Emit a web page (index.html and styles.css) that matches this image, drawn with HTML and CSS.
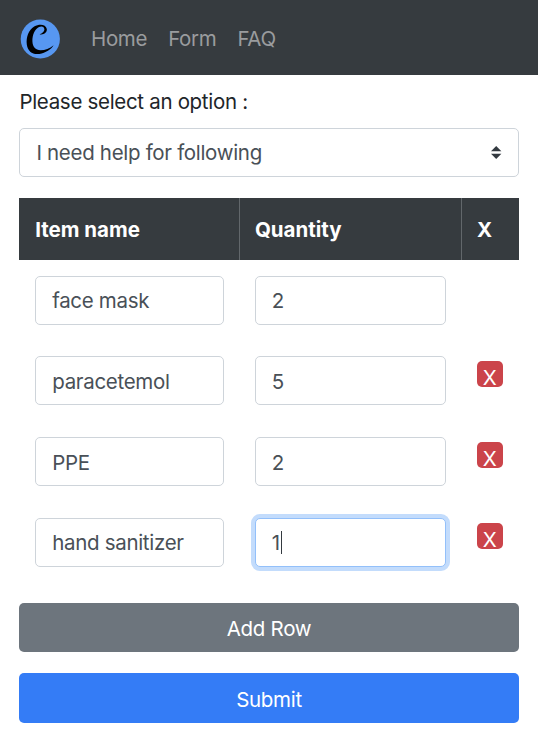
FILE: index.html
```html
<!DOCTYPE html>
<html lang="en">
<head>
<meta charset="utf-8">
<title>Request form</title>
<link rel="stylesheet" href="styles.css">
</head>
<body>
<nav class="navbar">
  <a class="brand" href="#" aria-label="Home page">
    <svg viewBox="0 0 40 40" width="40" height="40">
      <circle cx="20.3" cy="20" r="19.6" fill="#5797f1"/>
      <path d="M19.6 15.2C23.6 16.2 27.4 13.4 26.8 10C25.9 5.2 19.4 4.4 14.2 7.6C8.6 11 6 18.4 6.8 25.4C7.8 32.6 13 36 19.4 34.9C25.6 33.8 31.3 30.4 33.6 26.2C29.6 29.6 25.2 31.2 20.6 31.2C15.4 31.2 12.6 28 12.4 22.3C12.2 16 14.8 10 19 8C22 6.7 24.3 7.8 24.4 10.4C24.3 12.5 22.4 14.2 19.6 15.2Z" fill="#000"/>
    </svg>
  </a>
  <a class="nav-link" href="#">Home</a>
  <a class="nav-link" href="#">Form</a>
  <a class="nav-link" href="#">FAQ</a>
</nav>
<main class="content">
  <div class="label">Please select an option :</div>
  <div class="select">
    <span>I need help for following</span>
    <svg class="arrows" viewBox="0 0 4 5" width="10.4" height="13"><path fill="#343a40" d="M2 0L0 2h4zm0 5L0 3h4z"/></svg>
  </div>
  <div class="table">
    <div class="row head">
      <div class="cell">Item name</div><div class="cell">Quantity</div><div class="cell">X</div>
    </div>
    <div class="row">
      <div class="cell"><div class="input">face mask</div></div>
      <div class="cell"><div class="input">2</div></div>
      <div class="cell"></div>
    </div>
    <div class="row">
      <div class="cell"><div class="input">paracetemol</div></div>
      <div class="cell"><div class="input">5</div></div>
      <div class="cell"><button class="remove">X</button></div>
    </div>
    <div class="row">
      <div class="cell"><div class="input">PPE</div></div>
      <div class="cell"><div class="input">2</div></div>
      <div class="cell"><button class="remove">X</button></div>
    </div>
    <div class="row">
      <div class="cell"><div class="input">hand sanitizer</div></div>
      <div class="cell"><div class="input focus">1<i class="caret"></i></div></div>
      <div class="cell"><button class="remove">X</button></div>
    </div>
  </div>
  <button class="btn secondary">Add Row</button>
  <button class="btn primary">Submit</button>
</main>
</body>
</html>
```
FILE: styles.css
```css
* { box-sizing: border-box; }
body {
  margin: 0;
  background: #fff;
  color: #212529;
  font: 400 20.5px/31px Inter, "Liberation Sans", sans-serif;
  letter-spacing: -0.31px;
}
.navbar {
  display: flex;
  align-items: center;
  height: 75.4px;
  padding: 2px 20px 0;
  background: #363b3f;
}
.brand { display: block; height: 40px; margin-right: 31px; }
.brand svg { display: block; }
.nav-link {
  margin-right: 21px;
  color: #9a9c9e;
  letter-spacing: -0.33px;
  text-decoration: none;
}
.content { padding: 11px 19.4px 0; }
.label { height: 41.2px; }
.select {
  display: flex;
  align-items: center;
  justify-content: space-between;
  height: 49.3px;
  padding: 1px 16px 0;
  border: 1.3px solid #ced4da;
  border-radius: 5px;
  color: #495057;
}
.table { margin-top: 20.7px; }
.row { display: grid; grid-template-columns: 219.5px 222px 1fr; height: 80.6px; }
.row > .cell { padding: 16px 15px 16px 15.8px; }
.head {
  height: 62.3px;
  background: #363b3f;
  color: #fff;
  font-weight: 700;
  letter-spacing: 0;
}
.head > .cell { height: 62.3px; padding-top: 16.5px; }
.head > .cell + .cell { border-left: 1px solid #62676b; padding-left: 15px; }
.input {
  display: flex;
  align-items: center;
  height: 49px;
  padding: 1px 16px 0;
  border: 1.3px solid #ced4da;
  border-radius: 5px;
  background: #fff;
  color: #495057;
}
.focus { border-color: #93c0fa; box-shadow: 0 0 0 4px #c3dcfc; }
.caret { width: 1px; height: 23px; margin-left: 1px; background: #343a40; }
.remove {
  display: block;
  width: 26px;
  height: 26px;
  margin-top: 5px;
  padding: 8px 0 0;
  border: 0;
  border-radius: 5px;
  background: #cb444a;
  color: #fff;
  font: 400 20.5px/18px Inter, "Liberation Sans", sans-serif;
}
.btn {
  display: block;
  width: 100%;
  height: 49.5px;
  padding: 2px 0 0;
  border: 0;
  border-radius: 5px;
  color: #fff;
  font: inherit;
  letter-spacing: inherit;
}
.secondary { margin-top: 20.6px; background: #6d757d; }
.primary { margin-top: 21px; background: #347cf6; }
```
